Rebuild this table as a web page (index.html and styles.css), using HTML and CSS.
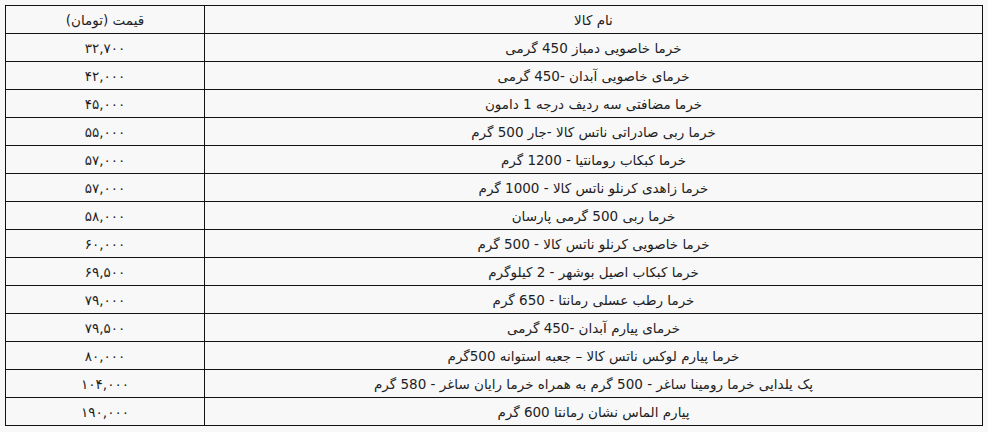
FILE: index.html
```html
<!DOCTYPE html>
<html lang="fa" dir="rtl">
<head>
<meta charset="utf-8">
<link rel="stylesheet" href="styles.css">
</head>
<body>
<table class="prices">
<thead>
<tr><th class="name">نام کالا</th><th class="price">قیمت (تومان)</th></tr>
</thead>
<tbody>
<tr><td>خرما خاصویی دمباز 450 گرمی</td><td>۳۲,۷۰۰</td></tr>
<tr><td>خرمای خاصویی آبدان -450 گرمی</td><td>۴۲,۰۰۰</td></tr>
<tr><td>خرما مضافتی سه ردیف درجه 1 دامون</td><td>۴۵,۰۰۰</td></tr>
<tr><td>خرما ربی صادراتی ناتس کالا -جار 500 گرم</td><td>۵۵,۰۰۰</td></tr>
<tr><td>خرما کبکاب رومانتیا - 1200 گرم</td><td>۵۷,۰۰۰</td></tr>
<tr><td>خرما زاهدی کرنلو ناتس کالا - 1000 گرم</td><td>۵۷,۰۰۰</td></tr>
<tr><td>خرما ربی 500 گرمی پارسان</td><td>۵۸,۰۰۰</td></tr>
<tr><td>خرما خاصویی کرنلو ناتس کالا - 500 گرم</td><td>۶۰,۰۰۰</td></tr>
<tr><td>خرما کبکاب اصیل بوشهر - 2 کیلوگرم</td><td>۶۹,۵۰۰</td></tr>
<tr><td>خرما رطب عسلی رمانتا - 650 گرم</td><td>۷۹,۰۰۰</td></tr>
<tr><td>خرمای پیارم آبدان -450 گرمی</td><td>۷۹,۵۰۰</td></tr>
<tr><td>خرما پیارم لوکس ناتس کالا – جعبه استوانه 500گرم</td><td>۸۰,۰۰۰</td></tr>
<tr><td>پک یلدایی خرما رومینا ساغر - 500 گرم به همراه خرما رایان ساغر - 580 گرم</td><td>۱۰۴,۰۰۰</td></tr>
<tr><td>پیارم الماس نشان رمانتا 600 گرم</td><td>۱۹۰,۰۰۰</td></tr>
</tbody>
</table>
</body>
</html>
```

FILE: styles.css
```css
html, body {
  margin: 0;
  padding: 0;
  background: #f8f8f8;
}
body {
  padding: 5px 5px 0 5px;
  font-family: "DejaVu Sans", "Noto Sans", sans-serif;
  font-size: 13.5px;
  color: #1e1e24;
}
.prices {
  width: 978px;
  border-collapse: collapse;
  table-layout: fixed;
}
.prices th,
.prices td {
  border: 1px solid #111;
  height: 27px;
  padding: 0;
  text-align: center;
  vertical-align: middle;
  font-weight: normal;
}
.prices th.price {
  width: 198px;
}
```
